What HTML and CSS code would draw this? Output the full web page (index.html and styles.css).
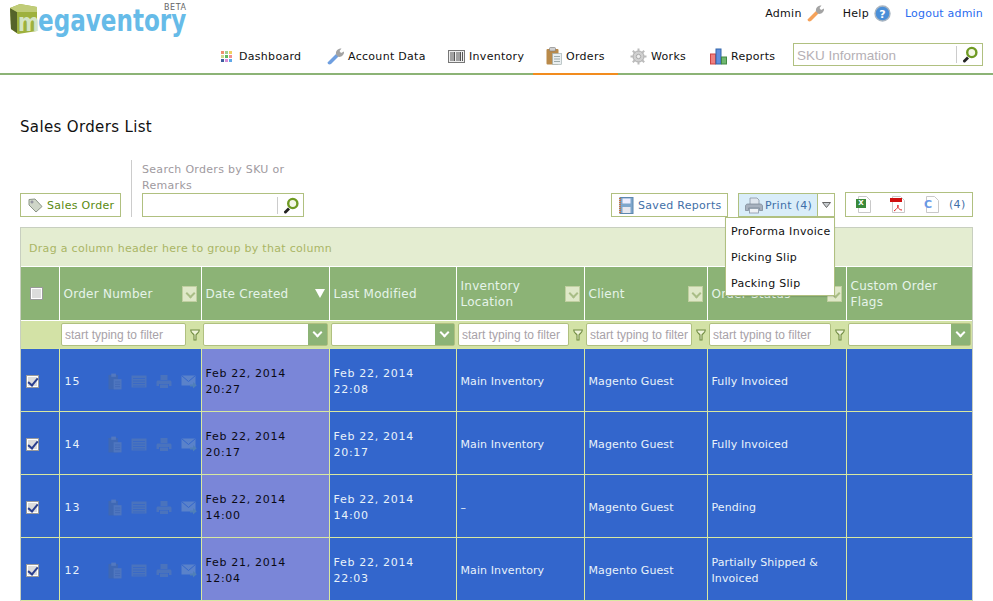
FILE: index.html
```html
<!DOCTYPE html>
<html lang="en">
<head>
<meta charset="utf-8">
<title>Sales Orders List</title>
<link rel="stylesheet" href="styles.css">
</head>
<body>
<svg class="defs" width="0" height="0" aria-hidden="true">
  <symbol id="i-wrench" viewBox="0 0 18 18">
    <path d="M2.500 17.500C1.500 17.500 .5 16.500 .5 15.500L9 7 11.500 9.500 4 17Z" fill="currentColor"/>
    <path d="M9 7.500C8.500 4 10.500 1.500 14.500 1.500L12.500 4 14 6 17 4.500C17.300 8 14.500 10.500 11 9.800Z" fill="#a3a3a3"/>
  </symbol>
  <symbol id="i-clip" viewBox="0 0 16 18">
    <rect x="0.500" y="2" width="12" height="15.500" rx="1" fill="currentColor"/>
    <rect x="3.500" y="0.500" width="6" height="3.500" rx="1" fill="#cfcfcf" stroke="#777" stroke-width=".6"/>
    <rect x="6.500" y="6.500" width="9" height="11" fill="#e9eef0" stroke="#9aa" stroke-width=".6"/>
    <path d="M8 9.500h6M8 12h6M8 14.500h6" stroke="#8a9a9a" stroke-width=".8"/>
  </symbol>
  <symbol id="i-clip-dim" viewBox="0 0 15 18">
    <rect x="0.500" y="2" width="10" height="15.500" fill="#3f68b4"/>
    <rect x="3.500" y="0.500" width="5" height="3.500" fill="#5378bf"/>
    <rect x="6" y="6.500" width="8.500" height="11" fill="#4f76bf"/>
    <path d="M7.500 9.500h5.500M7.500 12h5.500M7.500 14.500h5.500" stroke="#3f68b4" stroke-width=".8"/>
  </symbol>
  <symbol id="i-list" viewBox="0 0 16 14">
    <rect x="0.500" y="1" width="15" height="12" fill="currentColor"/>
    <path d="M2 4h12M2 6.500h12M2 9h12M2 11.500h12" stroke="#3366cc" stroke-width="1" opacity=".7"/>
  </symbol>
  <symbol id="i-print" viewBox="0 0 18 17">
    <path d="M5 1h7l2 2v5H5Z" fill="#dfe6ee" stroke="#8895a5" stroke-width=".8"/>
    <path d="M2.500 7h13c1 0 2 1 2 2v4.500h-3V11h-11v2.500h-3V9c0-1 1-2 2-2Z" fill="#a7b1be" stroke="#6a7684" stroke-width=".6"/>
    <rect x="4.500" y="11.500" width="9" height="4.500" fill="#eef1f5" stroke="#8895a5" stroke-width=".8"/>
  </symbol>
  <symbol id="i-print-dim" viewBox="0 0 16 15">
    <path d="M4.500 1h7v5h-7Z" fill="currentColor"/>
    <path d="M2 6.500h12c1 0 1.500 .6 1.500 1.500v4H13v-2H3v2H.5V8C.5 7.100 1 6.500 2 6.500Z" fill="currentColor"/>
    <rect x="4" y="10.500" width="8" height="3.500" fill="currentColor"/>
  </symbol>
  <symbol id="i-mail" viewBox="0 0 16 14">
    <rect x="0.500" y="1" width="14" height="10" fill="#5a82ca"/>
    <path d="M.5 1 7.500 7l7-6" fill="none" stroke="#3366cc" stroke-width="1"/>
    <path d="M9 10h3V7.500l3.800 3.300L12 14v-2H9Z" fill="#4f7fb8"/>
  </symbol>
  <symbol id="i-search" viewBox="0 0 16 17">
    <path d="M1 14.500 5 10.500 7 12.500 3 16.500C2 17 .5 15.500 1 14.500Z" fill="#222"/>
    <circle cx="9.800" cy="6.500" r="4.600" fill="#f4f7e6" stroke="#6f9a22" stroke-width="2.400"/>
  </symbol>
  <symbol id="i-funnel" viewBox="0 0 10 12">
    <path d="M.7 1h8.600C9.300 4 6.300 4.800 6 6v5H4V6C3.700 4.800 .7 4 .7 1Z" fill="#eef3d8" stroke="#6f8a40" stroke-width="1.100"/>
  </symbol>
  <symbol id="i-doc" viewBox="0 0 15 17">
    <path d="M2.500 .5h8l4 4v12h-12Z" fill="#fff" stroke="#c9c9c9"/>
  </symbol>
</svg>

<header class="topbar">
  <div class="logo">
    <svg class="cube" width="28" height="30" viewBox="0 0 28 30" aria-hidden="true">
      <path d="M0 4 10 0 27 3V27L8 30 1 25Z" fill="#9eb13d"/>
      <path d="M0 4 7 8V29L1 25Z" fill="#56632a"/>
      <path d="M0 4 10 0 27 3 27 8 7 8Z" fill="#c0cc78"/>
    </svg>
    <span class="logo-m">m</span><span class="logo-rest">egaventory</span>
    <span class="logo-beta">BETA</span>
  </div>
  <div class="top-right">
    <div class="util">
      <span class="util-item">Admin <svg class="ic18 orange" aria-hidden="true"><use href="#i-wrench"/></svg></span>
      <span class="util-item">Help
        <svg class="ic17" viewBox="0 0 17 17" aria-hidden="true"><circle cx="8.500" cy="8.500" r="7.500" fill="#4a8fd8" stroke="#a8b4c0" stroke-width="1.400"/><text x="8.500" y="12.500" text-anchor="middle" class="help-q">?</text></svg>
      </span>
      <a class="logout">Logout admin</a>
    </div>
    <nav class="nav">
      <a class="nav-item">
        <svg class="ic12" viewBox="0 0 11 11" aria-hidden="true">
          <rect width="3" height="3" fill="#ef8f6f"/><rect x="4" width="3" height="3" fill="#9fcf8f"/><rect x="8" width="3" height="3" fill="#f0d060"/>
          <rect y="4" width="3" height="3" fill="#d0d890"/><rect x="4" y="4" width="3" height="3" fill="#5fb85f"/><rect x="8" y="4" width="3" height="3" fill="#f08f8f"/>
          <rect y="8" width="3" height="3" fill="#3f5f9f"/><rect x="4" y="8" width="3" height="3" fill="#d88fd8"/><rect x="8" y="8" width="3" height="3" fill="#5fa8e8"/>
        </svg>Dashboard</a>
      <a class="nav-item"><svg class="ic18 blue" aria-hidden="true"><use href="#i-wrench"/></svg>Account Data</a>
      <a class="nav-item">
        <svg class="ic-bar" viewBox="0 0 17 13" aria-hidden="true"><rect x=".5" y=".5" width="16" height="12" fill="#eee" stroke="#777"/><path d="M3 2v9M5 2v9M6.500 2v9M9 2v9M11 2v9M12.500 2v9M14.500 2v9" stroke="#555" stroke-width="1"/></svg>Inventory</a>
      <a class="nav-item active"><svg class="ic18 brown" viewBox="0 0 16 18" aria-hidden="true"><use href="#i-clip"/></svg>Orders</a>
      <a class="nav-item">
        <svg class="ic17" viewBox="0 0 17 17" aria-hidden="true"><circle cx="8.500" cy="8.500" r="5.500" fill="#d0d0d0" stroke="#aaa"/><circle cx="8.500" cy="8.500" r="2.200" fill="#eee" stroke="#aaa"/><path d="M8.500 .5v3M8.500 13.500v3M.5 8.500h3M13.500 8.500h3M2.800 2.800 5 5M12 12l2.200 2.200M14.200 2.800 12 5M5 12l-2.200 2.200" stroke="#bbb" stroke-width="2"/></svg>Works</a>
      <a class="nav-item">
        <svg class="ic17" viewBox="0 0 17 17" aria-hidden="true"><rect x=".5" y="6" width="5" height="10" fill="#ef7f7f" stroke="#c44"/><rect x="6" y="1" width="5" height="15" fill="#5f8fdf" stroke="#36a"/><rect x="11.500" y="9" width="5" height="7" fill="#6fb86f" stroke="#484"/></svg>Reports</a>
      <div class="sku">
        <span class="sku-text">SKU Information</span>
        <span class="sku-btn"><svg class="ic16" aria-hidden="true"><use href="#i-search"/></svg></span>
      </div>
    </nav>
  </div>
</header>

<main class="page">
  <h1 class="title">Sales Orders List</h1>

  <div class="toolbar">
    <a class="btn new">
      <svg class="ic-tag" viewBox="0 0 15 15" aria-hidden="true"><path d="M1 1.500 7 1 14 8.500 8 14 1 7Z" fill="#cfd6c8" stroke="#8b9586"/><circle cx="4" cy="4" r="1" fill="#fff" stroke="#778"/></svg>Sales Order</a>
    <div class="search-block">
      <label class="search-label">Search Orders by SKU or Remarks</label>
      <div class="search-box"><span class="search-btn"><svg class="ic16" aria-hidden="true"><use href="#i-search"/></svg></span></div>
    </div>
    <div class="spacer"></div>
    <a class="btn saved">
      <svg class="ic-saved" viewBox="0 0 15 17" aria-hidden="true"><rect x="1" y=".5" width="13" height="16" fill="#7fa6cc" stroke="#5f88ae"/><rect x="3.500" y="1.500" width="8" height="5" fill="#eef"/><rect x="3.500" y="10" width="8" height="6" fill="#e8e8f0"/><path d="M1 1v15" stroke="#d0703a" stroke-width="2" stroke-dasharray="1 1"/></svg>Saved Reports</a>
    <div class="print-wrap">
      <a class="print-main"><svg class="ic-print" aria-hidden="true"><use href="#i-print"/></svg>Print (4)</a>
      <a class="print-caret"><svg width="9" height="6" viewBox="0 0 9 6" aria-hidden="true"><path d="M.5 .5h8L4.500 5.500Z" fill="#c8cdd0" stroke="#666"/></svg></a>
      <ul class="menu">
        <li>ProForma Invoice</li>
        <li>Picking Slip</li>
        <li>Packing Slip</li>
      </ul>
    </div>
    <div class="btn exports">
      <span class="doc"><svg class="ic-doc" aria-hidden="true"><use href="#i-doc"/></svg><b class="doc-x">X</b></span>
      <span class="doc"><svg class="ic-doc" aria-hidden="true"><use href="#i-doc"/></svg><b class="doc-p"></b><svg class="acro" viewBox="0 0 10 8" aria-hidden="true"><path d="M1 7C4 5 6 2 5 1 4 1 5 6 9 6" fill="none" stroke="#d22" stroke-width="1"/></svg></span>
      <span class="doc"><svg class="ic-doc" aria-hidden="true"><use href="#i-doc"/></svg><b class="doc-c">C</b></span>
      <span class="exports-count">(4)</span>
    </div>
  </div>

  <section class="grid">
    <div class="group-panel">Drag a column header here to group by that column</div>
    <table class="orders">
      <colgroup>
        <col class="c0"><col class="c1"><col class="c2"><col class="c3"><col class="c4"><col class="c5"><col class="c6"><col class="c7">
      </colgroup>
      <thead>
        <tr class="head">
          <th class="th-check"><span class="check"></span></th>
          <th><div class="th-in"><span>Order Number</span><span class="th-menu"></span></div></th>
          <th><div class="th-in"><span>Date Created</span><span class="sort-arrow"></span></div></th>
          <th><div class="th-in"><span>Last Modified</span></div></th>
          <th><div class="th-in"><span>Inventory Location</span><span class="th-menu"></span></div></th>
          <th><div class="th-in"><span>Client</span><span class="th-menu"></span></div></th>
          <th><div class="th-in"><span>Order Status</span><span class="th-menu"></span></div></th>
          <th><div class="th-in"><span>Custom Order Flags</span></div></th>
        </tr>
        <tr class="filters">
          <td></td>
          <td><div class="flt"><span class="flt-input">start typing to filter</span><svg class="ic-funnel" aria-hidden="true"><use href="#i-funnel"/></svg></div></td>
          <td><div class="flt"><span class="flt-select"><span class="flt-arrow"></span></span></div></td>
          <td><div class="flt"><span class="flt-select"><span class="flt-arrow"></span></span></div></td>
          <td><div class="flt"><span class="flt-input">start typing to filter</span><svg class="ic-funnel" aria-hidden="true"><use href="#i-funnel"/></svg></div></td>
          <td><div class="flt"><span class="flt-input">start typing to filter</span><svg class="ic-funnel" aria-hidden="true"><use href="#i-funnel"/></svg></div></td>
          <td><div class="flt"><span class="flt-input">start typing to filter</span><svg class="ic-funnel" aria-hidden="true"><use href="#i-funnel"/></svg></div></td>
          <td><div class="flt"><span class="flt-select"><span class="flt-arrow"></span></span></div></td>
        </tr>
      </thead>
      <tbody>
        <tr>
          <td class="td-check"><span class="check on"></span></td>
          <td class="td-num"><div class="num"><span class="num-text">15</span><span class="row-icons"><svg class="ri-clip" viewBox="0 0 15 18" aria-hidden="true"><use href="#i-clip-dim"/></svg><svg class="ri" aria-hidden="true"><use href="#i-list"/></svg><svg class="ri" aria-hidden="true"><use href="#i-print-dim"/></svg><svg class="ri" aria-hidden="true"><use href="#i-mail"/></svg></span></div></td>
          <td class="sorted date">Feb 22, 2014<br>20:27</td>
          <td class="date">Feb 22, 2014<br>22:08</td>
          <td>Main Inventory</td>
          <td>Magento Guest</td>
          <td>Fully Invoiced</td>
          <td></td>
        </tr>
        <tr>
          <td class="td-check"><span class="check on"></span></td>
          <td class="td-num"><div class="num"><span class="num-text">14</span><span class="row-icons"><svg class="ri-clip" viewBox="0 0 15 18" aria-hidden="true"><use href="#i-clip-dim"/></svg><svg class="ri" aria-hidden="true"><use href="#i-list"/></svg><svg class="ri" aria-hidden="true"><use href="#i-print-dim"/></svg><svg class="ri" aria-hidden="true"><use href="#i-mail"/></svg></span></div></td>
          <td class="sorted date">Feb 22, 2014<br>20:17</td>
          <td class="date">Feb 22, 2014<br>20:17</td>
          <td>Main Inventory</td>
          <td>Magento Guest</td>
          <td>Fully Invoiced</td>
          <td></td>
        </tr>
        <tr>
          <td class="td-check"><span class="check on"></span></td>
          <td class="td-num"><div class="num"><span class="num-text">13</span><span class="row-icons"><svg class="ri-clip" viewBox="0 0 15 18" aria-hidden="true"><use href="#i-clip-dim"/></svg><svg class="ri" aria-hidden="true"><use href="#i-list"/></svg><svg class="ri" aria-hidden="true"><use href="#i-print-dim"/></svg><svg class="ri" aria-hidden="true"><use href="#i-mail"/></svg></span></div></td>
          <td class="sorted date">Feb 22, 2014<br>14:00</td>
          <td class="date">Feb 22, 2014<br>14:00</td>
          <td>–</td>
          <td>Magento Guest</td>
          <td>Pending</td>
          <td></td>
        </tr>
        <tr>
          <td class="td-check"><span class="check on"></span></td>
          <td class="td-num"><div class="num"><span class="num-text">12</span><span class="row-icons"><svg class="ri-clip" viewBox="0 0 15 18" aria-hidden="true"><use href="#i-clip-dim"/></svg><svg class="ri" aria-hidden="true"><use href="#i-list"/></svg><svg class="ri" aria-hidden="true"><use href="#i-print-dim"/></svg><svg class="ri" aria-hidden="true"><use href="#i-mail"/></svg></span></div></td>
          <td class="sorted date">Feb 21, 2014<br>12:04</td>
          <td class="date">Feb 22, 2014<br>22:03</td>
          <td>Main Inventory</td>
          <td>Magento Guest</td>
          <td>Partially Shipped &amp; Invoiced</td>
          <td></td>
        </tr>
      </tbody>
    </table>
  </section>
</main>
</body>
</html>
```

FILE: styles.css
```css
* { box-sizing: border-box; }
html, body { margin: 0; padding: 0; }
body {
  font-family: "DejaVu Sans", Verdana, sans-serif;
  font-size: 11px;
  letter-spacing: .3px;
  color: #111;
  background: #fff;
  overflow: hidden;
  height: 601px;
}
.defs { position: absolute; }
a { color: inherit; text-decoration: none; }

/* top bar */
.topbar {
  height: 75px;
  border-bottom: 2px solid #8cb376;
  display: flex;
  justify-content: space-between;
}
.logo { position: relative; width: 180px; height: 40px; margin-left: 10px; margin-top: 3px; flex: none; }
.cube { position: absolute; left: 0; top: 1px; }
.logo-m {
  position: absolute; left: 8px; top: 13px;
  font: bold 25px/14px "DejaVu Sans", sans-serif; letter-spacing: 0;
  color: #d4e4c4; transform: scaleX(.82); transform-origin: left;
}
.logo-rest {
  position: absolute; left: 28px; top: 9px;
  font: bold 30px/18px "DejaVu Sans", sans-serif;
  letter-spacing: 0;
  color: #66bbe8;
  transform: scaleX(.77); transform-origin: left;
}
.logo-beta {
  position: absolute; left: 154px; top: 1px;
  font: 8px/8px "DejaVu Sans", sans-serif; letter-spacing: .6px; color: #666;
}

.top-right { display: flex; flex-direction: column; align-items: flex-end; padding-right: 10px; }
.util { display: flex; align-items: center; height: 26px; gap: 18px; }
.util-item { display: flex; align-items: center; gap: 5px; }
.logout { color: #2a6cf0; margin-left: -4px; letter-spacing: .2px; }
.nav {
  display: grid;
  grid-template-columns: 106px 121px 97px 85px 80px 90px 195px;
  height: 32px; margin-top: 15px;
}
.nav-item {
  display: flex; align-items: center; gap: 4px;
  padding: 1px 0 3px 12px; height: 32px;
  white-space: nowrap;
}
.nav-item.active { padding-left: 13px; position: relative; }
.nav-item.active::after {
  content: ""; position: absolute; left: 0; right: 0; bottom: -2px; height: 2px; background: #f28c1e;
}
.ic12 { width: 11px; height: 11px; margin-right: 3px; }
.ic16 { width: 16px; height: 17px; }
.ic17 { width: 17px; height: 17px; }
.ic18 { width: 18px; height: 18px; }
.ic-bar { width: 17px; height: 13px; }
.orange { color: #f5a25a; }
.blue { color: #6f9fe0; margin-right: -1px; }
.brown { color: #b98a4a; width: 16px; }
.help-q { font: bold 11px "DejaVu Sans", sans-serif; fill: #fff; }

.sku {
  width: 190px; height: 23px; margin-left: 5px; margin-top: 2px;
  border: 1px solid #b0c080;
  display: flex; align-items: center; justify-content: space-between;
  font: 13.500px "Liberation Sans", sans-serif; letter-spacing: 0; color: #b5b0b5;
  padding-left: 3px;
}
.sku-text { padding-top: 1px; }
.sku-btn { border-left: 1px solid #ccc; height: 17px; width: 26px; display: flex; align-items: center; justify-content: center; }

/* page */
.page { padding: 0 20px; }
.title {
  font-size: 15px; font-weight: normal; letter-spacing: .35px;
  margin: 0; padding-top: 44px; height: 85px; line-height: 17px;
}
.toolbar { display: flex; align-items: flex-end; height: 57px; margin-bottom: 10px; }
.btn {
  border: 1px solid #b0c080; height: 24px;
  display: flex; align-items: center;
}
.new { width: 101px; padding-left: 7px; color: #5a8a10; gap: 4px; }
.ic-tag { width: 15px; height: 15px; }
.search-block {
  margin-left: 10px; border-left: 1px solid #ccc; padding-left: 10px;
  height: 57px; width: 173px; display: flex; flex-direction: column; justify-content: flex-end;
}
.search-label { color: #a09aa0; line-height: 16px; width: 150px; margin-bottom: -1px; }
.search-box { border: 1px solid #b0c080; height: 24px; width: 162px; display: flex; align-items: center; justify-content: flex-end; }
.search-btn { border-left: 1px solid #ccc; height: 17px; width: 26px; display: flex; align-items: center; justify-content: center; }
.spacer { flex: 1; }
.saved { width: 117px; padding-left: 7px; gap: 4px; color: #3f6fa8; }
.ic-saved { width: 15px; height: 17px; }
.print-wrap { position: relative; display: flex; margin-left: 10px; height: 24px; }
.print-main {
  width: 80px; background: #d9edf9; border: 1px solid #b0c080;
  display: flex; align-items: center; padding-left: 6px; gap: 2px; color: #3f6fa8;
}
.ic-print { width: 18px; height: 17px; }
.print-caret { width: 17px; border: 1px solid #b0c080; border-left: 0; display: flex; align-items: center; justify-content: center; }
.menu {
  position: absolute; z-index: 5; right: 0; top: 24px; width: 110px; height: 79px;
  margin: 0; padding: 1px 0 0 5px; list-style: none; background: #fff;
  border: 1px solid #b0c080; box-shadow: 0 1px 1px rgba(0,0,0,.1);
}
.menu li { height: 26px; line-height: 26px; white-space: nowrap; }
.exports { width: 128px; margin-left: 10px; height: 25px; padding-left: 10px; gap: 19px; }
.exports .doc { position: relative; width: 15px; height: 17px; display: block; }
.ic-doc { width: 15px; height: 17px; display: block; }
.doc-x { position: absolute; left: 0; top: 3px; width: 10px; height: 9px; background: #3a8a3a; color: #fff; font-size: 7px; line-height: 9px; text-align: center; letter-spacing: 0; }
.doc-p { position: absolute; left: 0; top: 2px; width: 12px; height: 4px; background: #d01010; }
.acro { position: absolute; left: 3px; top: 8px; width: 10px; height: 8px; }
.doc-c { position: absolute; left: 0; top: 3px; font-size: 11px; line-height: 11px; color: #6a9ae8; letter-spacing: 0; }
.exports-count { color: #3f6fa8; margin-left: -9px; }

/* grid */
.grid { border: 1px solid #c8cfc0; border-bottom: 0; width: 953px; }
.group-panel {
  height: 38px; line-height: 38px; padding: 2px 0 0 8px;
  background: #e4edd1; color: #aab565;
}
.orders { width: 951px; border-collapse: collapse; table-layout: fixed; }
.c0 { width: 38px; }
.c1 { width: 142px; }
.c2 { width: 128px; }
.c3 { width: 127px; }
.c4 { width: 128px; }
.c5 { width: 123px; }
.c6 { width: 139px; }
.c7 { width: 126px; }
.head th {
  height: 54px; background: #8cb376; color: #e6f4ea; font-weight: normal; text-align: left;
  border: 1px solid #fff; padding: 0 4px; line-height: 16px; font-size: 12px; letter-spacing: .25px;
}
.head th.th-check { border-left: 0; padding: 0 0 0 9px; }
.head th:last-child { border-right: 0; }
.th-in { display: flex; justify-content: space-between; align-items: center; }
.th-in > span:first-child { padding-right: 8px; }
.th-menu {
  width: 15px; height: 16px; flex: none; background: #dfe8c8; border: 1px solid #c0cfa0; position: relative;
}
.th-menu::after, .flt-arrow::after {
  content: ""; position: absolute; left: 4px; top: 3px; width: 5px; height: 5px;
  border-right: 2px solid #a9bd86; border-bottom: 2px solid #a9bd86; transform: rotate(45deg);
}
.sort-arrow { width: 0; height: 0; border-left: 5px solid transparent; border-right: 5px solid transparent; border-top: 9px solid #fff; }
.check {
  display: block; width: 13px; height: 13px;
  background: #dcdcdc; border: 1px solid #9a9a9a; box-shadow: inset 0 0 0 1px #fff; position: relative;
}
.check.on::after {
  content: ""; position: absolute; left: 3px; top: 0; width: 4px; height: 8px;
  border-right: 2px solid #2a3f8f; border-bottom: 2px solid #2a3f8f; transform: rotate(40deg);
}
.filters td { height: 28px; background: #d3e2a6; padding: 0 0 0 2px; border: 0; }
.flt { display: flex; align-items: center; gap: 4px; }
.flt-input {
  flex: 1; min-width: 0; height: 23px; background: #fff; border: 1px solid #b0c080; border-radius: 2px;
  font: 12px/23px "Liberation Sans", sans-serif; letter-spacing: 0; color: #a8a2a8; padding-left: 3px;
  white-space: nowrap; overflow: hidden;
}
.ic-funnel { width: 10px; height: 12px; flex: none; margin-right: 1px; }
.flt-select { flex: 1; height: 23px; margin-right: 1px; background: #fff; border: 1px solid #b0c080; border-radius: 2px; display: flex; justify-content: flex-end; }
.flt-arrow { width: 19px; height: 21px; background: #8cb376; position: relative; }
.flt-arrow::after { left: 6px; top: 5px; border-color: #fff; }
tbody td {
  height: 63px; background: #3366cc; color: #e8f2fa; border: 1px solid #d8e8a0; padding: 4px 4px 0; line-height: 16px; letter-spacing: .1px;
}
tbody td.td-check { border-left: 0; padding: 2px 0 0 5px; }
tbody td.td-num { padding-top: 2px; }
tbody td:last-child { border-right: 0; }
tbody td.date { letter-spacing: .7px; }
tbody td.sorted { background: #7a86d8; color: #0a0a14; }
.num { display: flex; align-items: center; }
.num-text { width: 44px; padding: 2px 0 0 1px; letter-spacing: 1px; }
.row-icons { display: flex; align-items: center; gap: 9px; color: #4a73bd; }
.ri { width: 16px; height: 15px; }
.ri-clip { width: 14px; height: 17px; }
```
